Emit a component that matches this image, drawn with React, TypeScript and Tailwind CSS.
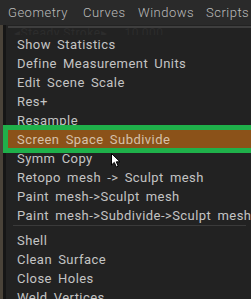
import React from "react";

const items1 = [
  "Show Statistics",
  "Define Measurement Units",
  "Edit Scene Scale",
  "Res+",
  "Resample",
  "Screen Space Subdivide",
  "Symm Copy",
  "Retopo mesh -> Sculpt mesh",
  "Paint mesh->Sculpt mesh",
  "Paint mesh->Subdivide->Sculpt mesh",
];
const items2 = ["Shell", "Clean Surface", "Close Holes", "Weld Vertices"];

const font = { fontFamily: "Roboto, 'Noto Sans', sans-serif" };

function Row({ label, active }: { label: string; active?: boolean }) {
  return (
    <div
      className={`h-[19px] flex items-center pl-[9px] whitespace-nowrap text-[13px] tracking-[0.45px] [word-spacing:2.5px] text-[#c4c4c4] ${
        active ? "bg-[#8b5219] text-[#d6c1aa]" : ""
      }`}
    >
      {label}
    </div>
  );
}

export default function App() {
  return (
    <div className="relative w-[251px] h-[299px] overflow-hidden bg-[#1e1e1e]" style={font}>
      <div className="h-[25px] bg-[#2a2a2a] flex items-center pl-[8px] text-[13px] tracking-[0.5px] text-[#bcbcbc] font-light whitespace-nowrap">
        <span className="w-[75px] shrink-0">Geometry</span>
        <span className="w-[55px] shrink-0">Curves</span>
        <span className="w-[68px] shrink-0">Windows</span>
        <span className="shrink-0">Scripts</span>
      </div>
      <div className="flex h-[274px]">
        <div className="w-[3px] bg-[#4a4339] shrink-0" />
        <div className="w-[3px] bg-[#161616] shrink-0" />
        <div className="flex-1 bg-[#222222] relative">
          <div className="h-[2px] mx-[2px] mt-[1px] bg-[#3e3e3e]" />
          <div className="h-[7px] overflow-hidden relative">
            <div className="absolute top-[-1px] left-[8px] text-[12px] leading-[12px] text-[#2c2c2c] whitespace-nowrap tracking-[0.5px]">
              ◂Steady Stroke▸ &nbsp;&nbsp;&nbsp; 10,000
            </div>
          </div>
          <div className="px-[2px]">
            {items1.map((l, i) => (
              <Row key={l} label={l} active={i === 5} />
            ))}
            <div className="h-px bg-[#3a3a3a] mx-[5px] mb-[5px]" />
            {items2.map((l) => (
              <Row key={l} label={l} />
            ))}
          </div>
        </div>
      </div>
      <div className="absolute left-[3px] top-[125px] w-[260px] h-[28px] border-[5px] border-[#1fb04a]" />
      <svg className="absolute left-[111px] top-[153px]" width="11" height="16" viewBox="0 0 11 16">
        <path d="M0.5 0.5 L0.5 12 L3.3 9.4 L5.3 14 L7.2 13.2 L5.3 8.8 L9 8.8 Z" fill="#fff" stroke="#000" strokeWidth="1" />
      </svg>
    </div>
  );
}
